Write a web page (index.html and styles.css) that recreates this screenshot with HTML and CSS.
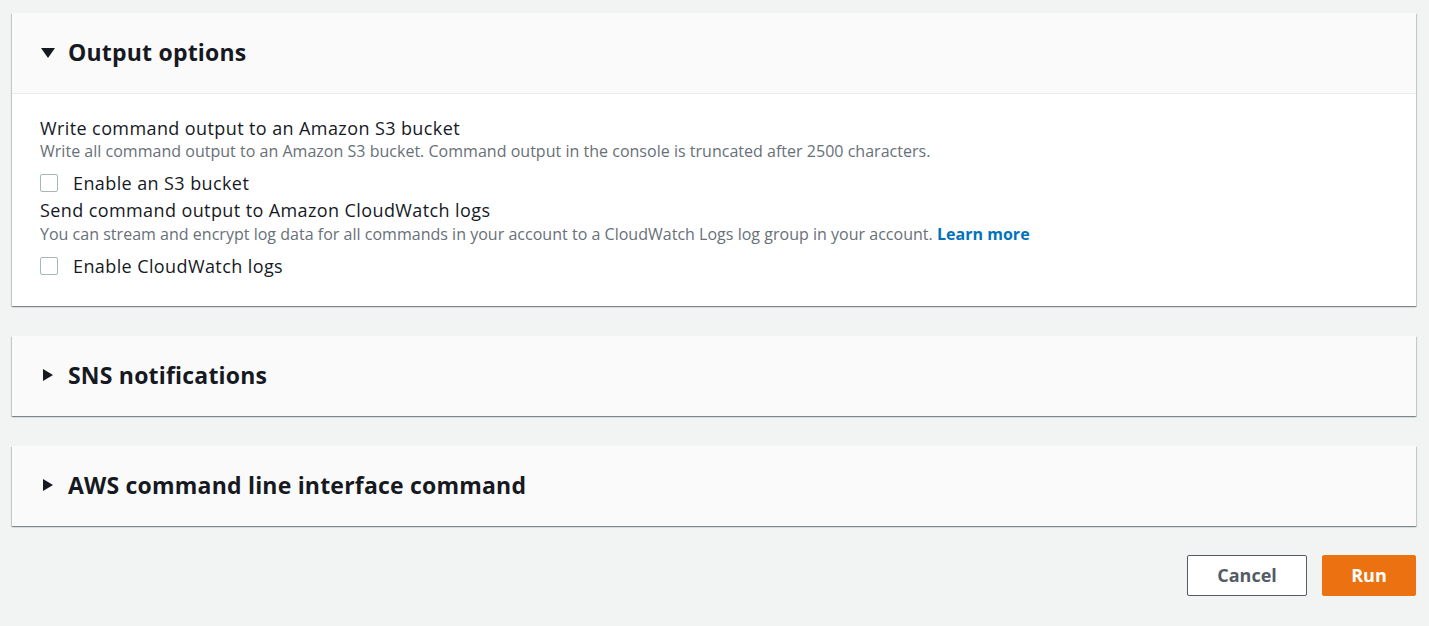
FILE: index.html
```html
<!DOCTYPE html>
<html>
<head>
<meta charset="utf-8">
<link rel="stylesheet" href="styles.css">
</head>
<body>
<main class="page">
  <section class="panel">
    <header class="panel-header">
      <span class="caret caret-down"></span>
      <h2 class="panel-title">Output options</h2>
    </header>
    <div class="panel-body">
      <div class="field">
        <div class="field-label">Write command output to an Amazon S3 bucket</div>
        <div class="field-desc">Write all command output to an Amazon S3 bucket. Command output in the console is truncated after 2500 characters.</div>
        <label class="check-row"><span class="checkbox"></span><span class="check-label">Enable an S3 bucket</span></label>
      </div>
      <div class="field field-second">
        <div class="field-label">Send command output to Amazon CloudWatch logs</div>
        <div class="field-desc">You can stream and encrypt log data for all commands in your account to a CloudWatch Logs log group in your account. <a class="link" href="#">Learn more</a></div>
        <label class="check-row"><span class="checkbox"></span><span class="check-label">Enable CloudWatch logs</span></label>
      </div>
    </div>
  </section>
  <section class="panel">
    <header class="panel-header">
      <span class="caret caret-right"></span>
      <h2 class="panel-title">SNS notifications</h2>
    </header>
  </section>
  <section class="panel">
    <header class="panel-header">
      <span class="caret caret-right"></span>
      <h2 class="panel-title">AWS command line interface command</h2>
    </header>
  </section>
  <div class="actions">
    <button class="btn btn-cancel">Cancel</button>
    <button class="btn btn-run">Run</button>
  </div>
</main>
</body>
</html>
```
FILE: styles.css
```css
* { box-sizing: border-box; }
html, body { margin: 0; padding: 0; }
body {
  background: #f2f3f3;
  font-family: "Open Sans", "Noto Sans", sans-serif;
  color: #16191f;
  width: 1429px;
  height: 626px;
  overflow: hidden;
}
.page {
  padding: 13px 13px 0 12px;
  display: flex;
  flex-direction: column;
  gap: 30px;
}
.panel {
  background: #fff;
  box-shadow: 0 1px 1px 0 rgba(0,28,36,.3), 1px 1px 1px 0 rgba(0,28,36,.15), -1px 1px 1px 0 rgba(0,28,36,.15);
}
.panel-header {
  background: #fafafa;
  height: 80px;
  display: flex;
  align-items: center;
  padding-left: 29px;
  padding-bottom: 3px;
  gap: 13px;
}
.panel:first-child .panel-header { border-bottom: 1px solid #eaeded; height: 81px; }
.caret { width: 0; height: 0; display: inline-block; }
.caret-down {
  border-left: 7px solid transparent;
  border-right: 7px solid transparent;
  border-top: 10px solid #16191f;
  margin-top: 2px;
}
.caret-right {
  border-top: 6px solid transparent;
  border-bottom: 6px solid transparent;
  border-left: 10px solid #16191f;
  margin-left: 2px;
  margin-right: 2px;
}
.panel-title {
  margin: 0;
  font-size: 23px;
  font-weight: 700;
  line-height: 28px;
  letter-spacing: 0.2px;
}
.panel-body {
  padding: 23px 28px 29px 28px;
}
.field-label { font-size: 18px; line-height: 22px; letter-spacing: 0.4px; }
.field-desc { font-size: 16px; line-height: 22px; color: #687078; letter-spacing: 0.02px; margin-top: 1px; }
.link { color: #0073bb; font-weight: 700; text-decoration: none; }
.check-row {
  display: flex;
  align-items: center;
  gap: 15px;
  margin-top: 10px;
  height: 22px;
}
.field-second { margin-top: 5px; }
.field-second .field-desc { margin-top: 2px; }
.field-second .check-row { margin-top: 10px; }
.checkbox {
  width: 18px;
  height: 18px;
  border: 1px solid #aab7b8;
  border-radius: 2px;
  background: #fff;
}
.check-label { font-size: 18px; line-height: 22px; letter-spacing: 0.4px; }
.actions {
  display: flex;
  justify-content: flex-end;
  gap: 15px;
  margin-top: -1px;
}
.btn {
  height: 41px;
  border-radius: 2px;
  font-family: inherit;
  font-size: 18px;
  font-weight: 700;
  cursor: pointer;
  padding-bottom: 2px;
}
.btn-cancel {
  width: 120px;
  background: #fff;
  border: 1px solid #545b64;
  color: #545b64;
}
.btn-run {
  width: 94px;
  background: #ec7211;
  border: 1px solid #ec7211;
  color: #fff;
}
```
